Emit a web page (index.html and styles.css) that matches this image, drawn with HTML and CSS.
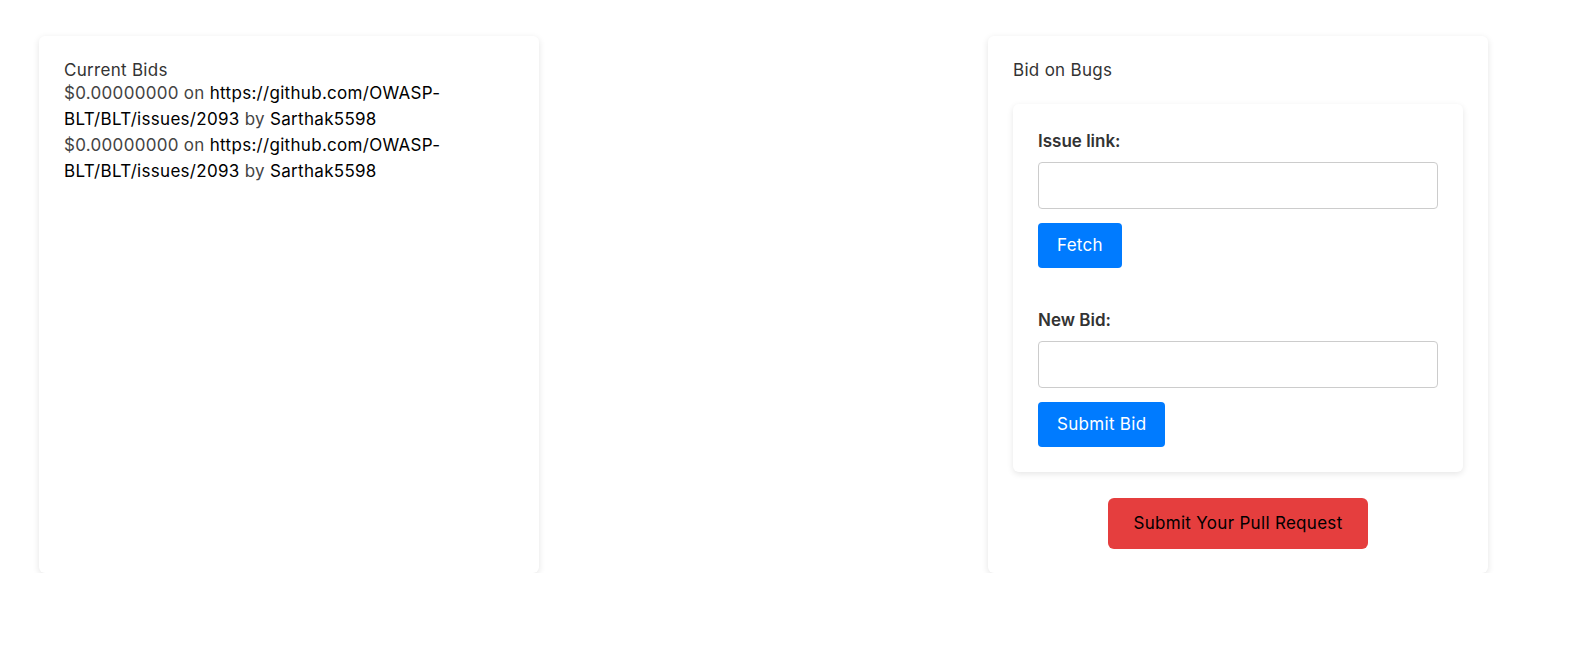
FILE: index.html
```html
<!DOCTYPE html>
<html>
<head>
<meta charset="utf-8">
<link rel="stylesheet" href="styles.css">
</head>
<body>
<div class="page">
  <section class="card">
    <div class="card-title">Current Bids</div>
    <p class="bid"><span class="amt">$0.00000000</span> on <a class="link" href="#">https://github.com/OWASP-BLT/BLT/issues/2093</a> by <span class="user">Sarthak5598</span></p>
    <p class="bid"><span class="amt">$0.00000000</span> on <a class="link" href="#">https://github.com/OWASP-BLT/BLT/issues/2093</a> by <span class="user">Sarthak5598</span></p>
  </section>
  <section class="card">
    <div class="card-title title-gap">Bid on Bugs</div>
    <form class="form-card">
      <div class="group">
        <label class="label">Issue link:</label>
        <input class="input" type="text">
        <button type="button" class="btn-blue">Fetch</button>
      </div>
      <div class="group group-2">
        <label class="label">New Bid:</label>
        <input class="input" type="text">
        <button type="button" class="btn-blue">Submit Bid</button>
      </div>
    </form>
    <div class="pr-row">
      <button type="button" class="btn-red">Submit Your Pull Request</button>
    </div>
  </section>
</div>
</body>
</html>
```
FILE: styles.css
```css
* { box-sizing: border-box; }
html, body { margin: 0; padding: 0; background: #fff; }
body {
  font-family: Inter, "Noto Sans", sans-serif;
  font-size: 17px;
  letter-spacing: 0.3px;
  color: #333;
}
.page {
  display: flex;
  justify-content: space-between;
  padding: 36px 82px 0 39px;
}
.card {
  width: 500px;
  height: 537px;
  background: #fff;
  border-radius: 6px;
  padding: 25px;
  box-shadow: 0 2px 7px rgba(0,0,0,0.11);
}
.card-title {
  line-height: 19px;
  color: #333;
}
.title-gap { margin-bottom: 24px; }
.bid {
  margin: 0;
  line-height: 26px;
  color: #444;
}
.link { color: #000; text-decoration: none; }
.user { color: #000; }
.form-card {
  background: #fff;
  border-radius: 6px;
  padding: 25px;
  box-shadow: 0 2px 6px rgba(0,0,0,0.1);
  margin: 0;
}
.group { display: flex; flex-direction: column; align-items: flex-start; }
.group-2 { margin-top: 40px; }
.label {
  font-weight: 600;
  letter-spacing: 0;
  color: #333;
  line-height: 25px;
  margin-bottom: 8px;
}
.input {
  width: 100%;
  height: 47px;
  border: 1px solid #ccc;
  border-radius: 4px;
  font: inherit;
  padding: 8px;
  margin: 0 0 14px 0;
}
.btn-blue {
  background: #007bff;
  color: #fff;
  border: none;
  border-radius: 4px;
  font-family: Inter, "Noto Sans", sans-serif;
  font-size: 17px;
  letter-spacing: 0.3px;
  line-height: 19px;
  padding: 13px 19px;
  cursor: pointer;
}
.pr-row {
  display: flex;
  justify-content: center;
  margin-top: 26px;
}
.btn-red {
  background: #e53e3e;
  color: #000;
  border: none;
  border-radius: 6px;
  font-family: Inter, "Noto Sans", sans-serif;
  font-size: 17px;
  letter-spacing: 0.3px;
  line-height: 19px;
  padding: 0 25px;
  height: 51px;
}
```
